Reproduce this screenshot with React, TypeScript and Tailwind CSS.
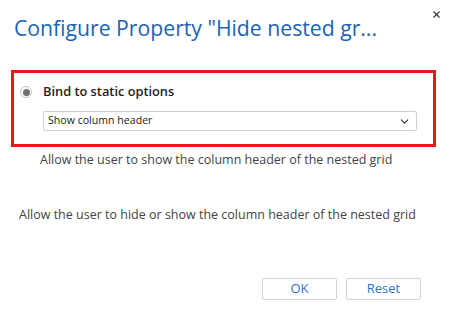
import { ChevronDown, X } from "lucide-react";

const App = () => {
  return (
    <div
      className="relative w-[450px] h-[324px] bg-white overflow-hidden"
      style={{ fontFamily: '"Open Sans", "Noto Sans", sans-serif' }}
    >
      {/* Close button */}
      <button className="absolute top-[9px] right-[8px] text-[#333]">
        <X size={11} strokeWidth={2.4} />
      </button>

      {/* Title */}
      <h1 className="pt-[13px] pl-[14px] text-[21.2px] leading-[30px] text-[#1b63b6] whitespace-nowrap">
        Configure Property "Hide nested gr...
      </h1>

      {/* Highlighted option box */}
      <div className="mt-[27px] mx-[11px] w-[425px] h-[77px] border-[3px] border-[#e31b1b] pl-[29px] pr-[16px] pt-[8px]">
        <div className="relative flex items-center h-[22px]">
          <span className="absolute left-[-23px] top-[5px] w-[12px] h-[12px] rounded-full border border-[#c4c4c4] bg-white flex items-center justify-center">
            <span className="w-[7px] h-[7px] rounded-full bg-[#707070]" />
          </span>
          <span className="text-[12.8px] font-semibold text-[#1e1e1e]">Bind to static options</span>
        </div>
        <div className="mt-[8px] flex items-center justify-between h-[20px] border border-[#cfcfcf] rounded-[2px] pl-[4px] pr-[5px]">
          <span className="text-[10.6px] text-[#222]">Show column header</span>
          <ChevronDown size={13} strokeWidth={2} className="text-[#333]" />
        </div>
      </div>

      <p className="mt-[3px] pl-[40px] text-[12.5px] leading-[20px] text-[#444]">
        Allow the user to show the column header of the nested grid
      </p>

      <p className="mt-[35px] pl-[19px] text-[12.5px] leading-[20px] text-[#444]">
        Allow the user to hide or show the column header of the nested grid
      </p>

      {/* Footer buttons */}
      <div className="mt-[53px] flex justify-end gap-[9px] pr-[29px]">
        <button className="w-[75px] h-[22px] border border-[#d4d4d4] rounded-[2px] text-[13px] text-[#2d73c8] bg-white">
          OK
        </button>
        <button className="w-[75px] h-[22px] border border-[#d4d4d4] rounded-[2px] text-[13px] text-[#2d73c8] bg-white">
          Reset
        </button>
      </div>
    </div>
  );
};

export default App;
